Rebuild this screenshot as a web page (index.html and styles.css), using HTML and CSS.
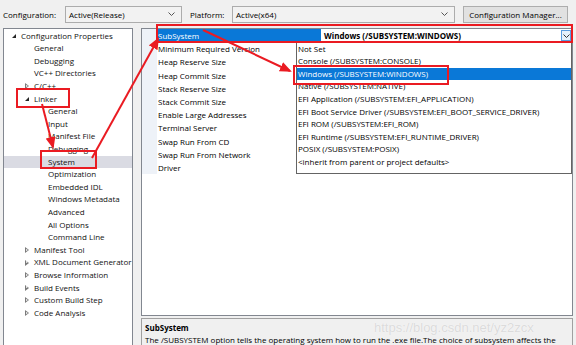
FILE: index.html
```html
<!DOCTYPE html>
<html lang="en">
<head>
    <meta charset="UTF-8">
    <meta name="viewport" content="width=device-width, initial-scale=1.0">
    <title>Linker System Property Pages</title>
    <link rel="stylesheet" href="styles.css">
</head>
<body>

    <div class="toolbar">
        <span class="label">Configuration:</span>
        <div class="combo combo-config">
            <span>Active(Release)</span>
            <svg class="chev" width="7" height="4" viewBox="0 0 7 4"><polyline points="0.5,0.5 3.5,3.5 6.5,0.5" fill="none" stroke="#555" stroke-width="1"/></svg>
        </div>
        <span class="label label-platform">Platform:</span>
        <div class="combo combo-platform">
            <span>Active(x64)</span>
            <svg class="chev" width="7" height="4" viewBox="0 0 7 4"><polyline points="0.5,0.5 3.5,3.5 6.5,0.5" fill="none" stroke="#555" stroke-width="1"/></svg>
        </div>
        <button class="btn">Configuration Manager...</button>
    </div>

    <div class="main">
        <div class="tree">
            <div class="node lvl1"><span class="twisty open"></span>Configuration Properties</div>
            <div class="node lvl2"><span class="twisty"></span>General</div>
            <div class="node lvl2"><span class="twisty"></span>Debugging</div>
            <div class="node lvl2"><span class="twisty"></span>VC++ Directories</div>
            <div class="node lvl2"><span class="twisty closed"></span>C/C++</div>
            <div class="node lvl2"><span class="twisty open"></span>Linker</div>
            <div class="node lvl3"><span class="twisty"></span>General</div>
            <div class="node lvl3"><span class="twisty"></span>Input</div>
            <div class="node lvl3"><span class="twisty"></span>Manifest File</div>
            <div class="node lvl3"><span class="twisty"></span>Debugging</div>
            <div class="node lvl3 current"><span class="twisty"></span>System</div>
            <div class="node lvl3"><span class="twisty"></span>Optimization</div>
            <div class="node lvl3"><span class="twisty"></span>Embedded IDL</div>
            <div class="node lvl3"><span class="twisty"></span>Windows Metadata</div>
            <div class="node lvl3"><span class="twisty"></span>Advanced</div>
            <div class="node lvl3"><span class="twisty"></span>All Options</div>
            <div class="node lvl3"><span class="twisty"></span>Command Line</div>
            <div class="node lvl2"><span class="twisty closed"></span>Manifest Tool</div>
            <div class="node lvl2"><span class="twisty closed"></span>XML Document Generator</div>
            <div class="node lvl2"><span class="twisty closed"></span>Browse Information</div>
            <div class="node lvl2"><span class="twisty closed"></span>Build Events</div>
            <div class="node lvl2"><span class="twisty closed"></span>Custom Build Step</div>
            <div class="node lvl2"><span class="twisty closed"></span>Code Analysis</div>
        </div>

        <div class="right">
            <div class="grid">
                <div class="prop selected">
                    <span class="gutter"></span>
                    <span class="name">SubSystem</span>
                    <span class="value">
                        <b>Windows (/SUBSYSTEM:WINDOWS)</b>
                        <span class="drop-btn">
                            <svg width="7" height="4" viewBox="0 0 7 4"><polyline points="0.5,0.5 3.5,3.5 6.5,0.5" fill="none" stroke="#333" stroke-width="1"/></svg>
                        </span>
                    </span>
                </div>
                <div class="prop"><span class="gutter"></span><span class="name">Minimum Required Version</span></div>
                <div class="prop"><span class="gutter"></span><span class="name">Heap Reserve Size</span></div>
                <div class="prop"><span class="gutter"></span><span class="name">Heap Commit Size</span></div>
                <div class="prop"><span class="gutter"></span><span class="name">Stack Reserve Size</span></div>
                <div class="prop"><span class="gutter"></span><span class="name">Stack Commit Size</span></div>
                <div class="prop"><span class="gutter"></span><span class="name">Enable Large Addresses</span></div>
                <div class="prop"><span class="gutter"></span><span class="name">Terminal Server</span></div>
                <div class="prop"><span class="gutter"></span><span class="name">Swap Run From CD</span></div>
                <div class="prop"><span class="gutter"></span><span class="name">Swap Run From Network</span></div>
                <div class="prop"><span class="gutter"></span><span class="name">Driver</span></div>

                <div class="dropdown">
                    <div class="opt">Not Set</div>
                    <div class="opt">Console (/SUBSYSTEM:CONSOLE)</div>
                    <div class="opt active">Windows (/SUBSYSTEM:WINDOWS)</div>
                    <div class="opt">Native (/SUBSYSTEM:NATIVE)</div>
                    <div class="opt">EFI Application (/SUBSYSTEM:EFI_APPLICATION)</div>
                    <div class="opt">EFI Boot Service Driver (/SUBSYSTEM:EFI_BOOT_SERVICE_DRIVER)</div>
                    <div class="opt">EFI ROM (/SUBSYSTEM:EFI_ROM)</div>
                    <div class="opt">EFI Runtime (/SUBSYSTEM:EFI_RUNTIME_DRIVER)</div>
                    <div class="opt">POSIX (/SUBSYSTEM:POSIX)</div>
                    <div class="opt">&lt;inherit from parent or project defaults&gt;</div>
                </div>
            </div>

            <div class="desc">
                <div class="desc-title">SubSystem</div>
                <div class="desc-text">The /SUBSYSTEM option tells the operating system how to run the .exe file.The choice of subsystem affects the</div>
                <span class="watermark">https://blog.csdn.net/yz2zcx</span>
            </div>
        </div>
    </div>

    <!-- red annotations drawn on top of the screenshot -->
    <svg class="marks" width="576" height="345" viewBox="0 0 576 345">
        <defs>
            <marker id="head" markerWidth="6" markerHeight="5" refX="5" refY="2.5" orient="auto" markerUnits="strokeWidth">
                <polygon points="0,0 6,2.5 0,5" fill="#ea1b22"/>
            </marker>
        </defs>
        <g fill="none" stroke="#ea1b22" stroke-width="2">
            <rect x="157" y="25" width="415" height="17"/>
            <rect x="294" y="66" width="154" height="18"/>
            <rect x="17" y="89" width="52" height="18"/>
            <rect x="41" y="151" width="55" height="17"/>
            <line x1="42" y1="104" x2="53" y2="147" marker-end="url(#head)"/>
            <line x1="92" y1="158" x2="158" y2="39" marker-end="url(#head)"/>
            <line x1="203" y1="30" x2="290" y2="71" marker-end="url(#head)"/>
        </g>
    </svg>

</body>
</html>
```

FILE: styles.css
```css
body {
    margin: 0;
    width: 576px;
    height: 345px;
    overflow: hidden;
    position: relative;
    background-color: #f0f0f0;
    font-family: "Open Sans", "Noto Sans", sans-serif;
    font-size: 8px;
    color: #000;
}

.toolbar {
    height: 28px;
    display: flex;
    align-items: center;
    padding-left: 3px;
    box-sizing: border-box;
}

.label {
    width: 62px;
}

.label-platform {
    width: 42px;
    margin-left: 8px;
}

.combo {
    height: 17px;
    box-sizing: border-box;
    border: 1px solid #acacac;
    background-color: #f2f2f2;
    display: flex;
    align-items: center;
    justify-content: space-between;
    padding: 0 6px 0 3px;
}

.combo-config {
    width: 117px;
}

.combo-platform {
    width: 223px;
}

.btn {
    margin-left: 8px;
    width: 105px;
    height: 17px;
    padding: 0;
    font-family: inherit;
    font-size: 8px;
    background-color: #e1e1e1;
    border: 1px solid #adadad;
    color: #000;
}

.main {
    display: flex;
    padding-left: 3px;
    gap: 8px;
}

.tree {
    width: 130px;
    height: 330px;
    box-sizing: border-box;
    border: 1px solid #828790;
    background-color: #fff;
    padding-top: 0.7px;
}

.node {
    height: 12.6px;
    line-height: 12.6px;
    display: flex;
    align-items: center;
    white-space: nowrap;
    color: #111;
}

.lvl1 {
    padding-left: 7px;
}

.lvl2 {
    padding-left: 20px;
}

.lvl3 {
    padding-left: 34px;
}

.twisty {
    width: 10px;
    height: 12px;
    flex: none;
    position: relative;
}

.twisty.open::before {
    content: "";
    position: absolute;
    left: 1px;
    top: 4px;
    border-style: solid;
    border-width: 0 0 4px 4px;
    border-color: transparent transparent #262626 transparent;
}

.twisty.closed::before {
    content: "";
    position: absolute;
    left: 1px;
    top: 3px;
    width: 0;
    height: 0;
    border-style: solid;
    border-width: 3px 0 3px 4px;
    border-color: transparent transparent transparent #7a7a7a;
}

.twisty.closed::after {
    content: "";
    position: absolute;
    left: 2px;
    top: 4.5px;
    border-style: solid;
    border-width: 1.5px 0 1.5px 2px;
    border-color: transparent transparent transparent #fff;
}

.node.current {
    background-color: #dadbe3;
}

.right {
    width: 432px;
    display: flex;
    flex-direction: column;
}

.grid {
    height: 288px;
    box-sizing: border-box;
    border: 1px solid #828790;
    background-color: #fff;
    position: relative;
}

.prop {
    height: 13.2px;
    line-height: 13.2px;
    display: flex;
    white-space: nowrap;
}

.gutter {
    width: 15px;
    flex: none;
    background-color: #eef2f8;
}

.name {
    width: 163px;
    flex: none;
    padding-left: 1px;
    overflow: hidden;
}

.prop.selected .name {
    background-color: #0a78d7;
    color: #fff;
}

.value {
    flex: 1;
    display: flex;
    justify-content: space-between;
    align-items: center;
    padding-left: 3px;
}

.drop-btn {
    width: 10px;
    height: 11px;
    margin-right: 1px;
    box-sizing: border-box;
    border: 1px solid #5a9de0;
    background-color: #e5f1fb;
    display: flex;
    align-items: center;
    justify-content: center;
}

.dropdown {
    position: absolute;
    left: 154px;
    top: 12px;
    width: 276px;
    height: 133px;
    box-sizing: border-box;
    border: 1px solid #646464;
    background-color: #fff;
    padding-top: 0.6px;
}

.opt {
    height: 12.6px;
    line-height: 12.6px;
    padding-left: 1px;
    white-space: nowrap;
}

.opt.active {
    background-color: #0a78d7;
    color: #fff;
}

.desc {
    margin-top: 2px;
    height: 40px;
    box-sizing: border-box;
    border: 1px solid #a0a0a0;
    background-color: #f0f0f0;
    padding: 3px 0 0 3px;
    position: relative;
    white-space: nowrap;
    overflow: hidden;
}

.desc-title {
    font-weight: bold;
    height: 12px;
    line-height: 12px;
}

.desc-text {
    height: 12px;
    line-height: 12px;
}

.watermark {
    position: absolute;
    left: 232px;
    top: 1px;
    font-family: "Liberation Sans", Arial, sans-serif;
    font-size: 13px;
    color: rgba(215, 215, 215, 0.9);
    text-shadow: 0 0 1px #fff;
}

.marks {
    position: absolute;
    left: 0;
    top: 0;
    pointer-events: none;
}
```
